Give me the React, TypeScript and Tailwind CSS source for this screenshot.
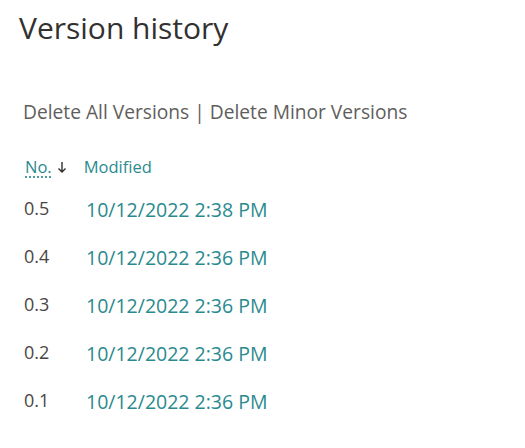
const versions = [
  { no: '0.5', modified: '10/12/2022 2:38 PM' },
  { no: '0.4', modified: '10/12/2022 2:36 PM' },
  { no: '0.3', modified: '10/12/2022 2:36 PM' },
  { no: '0.2', modified: '10/12/2022 2:36 PM' },
  { no: '0.1', modified: '10/12/2022 2:36 PM' },
]

export default function App() {
  return (
    <div className="h-[448px] w-[525px] bg-white pl-[19px] pt-[8px] font-['Open_Sans',sans-serif]">
      <h1 className="text-[30px] font-normal leading-[40px] text-[#323130]">Version history</h1>

      <div className="mt-[52px] pl-[4px] text-[19.2px] leading-[24px] text-[#605e5c]">
        Delete All Versions | Delete Minor Versions
      </div>

      {/* Column headers */}
      <div className="mt-[32px] flex items-center pl-[6px] text-[16.5px] leading-[22px] text-[#2a8a8e]">
        <span className="underline decoration-dotted decoration-[#2a8a8e] underline-offset-[4px]">No.</span>
        <svg width="10" height="13" viewBox="0 0 10 13" className="ml-[5px]">
          <path d="M5 1v10M1.5 7.5 5 11l3.5-3.5" fill="none" stroke="#323130" strokeWidth="1.4" />
        </svg>
        <span className="ml-[17px]">Modified</span>
      </div>

      {/* Rows */}
      <div className="mt-[18px] flex flex-col gap-[21px] pl-[5px]">
        {versions.map((v) => (
          <div key={v.no} className="flex items-start">
            <span className="w-[62px] text-[18px] leading-[24px] text-[#484644]">{v.no}</span>
            <span className="mt-[1px] text-[19.5px] leading-[26px] text-[#2a8a8e]">{v.modified}</span>
          </div>
        ))}
      </div>
    </div>
  )
}
